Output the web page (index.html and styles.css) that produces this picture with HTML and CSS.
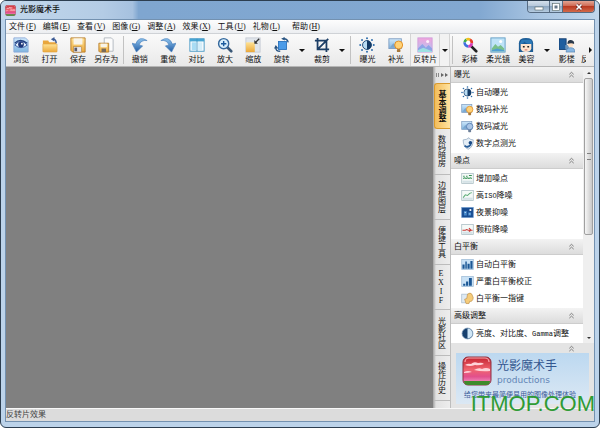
FILE: index.html
```html
<!DOCTYPE html>
<html lang="zh-CN">
<head>
  <meta charset="UTF-8">
  <meta name="viewport" content="width=device-width, initial-scale=1">
  <title>光影魔术手</title>
  <link rel="stylesheet" href="styles.css">
</head>
<body>
  <svg class="defs" aria-hidden="true">
    <defs>
      <linearGradient id="gold" x1="0" y1="0" x2="0" y2="1"><stop offset="0" stop-color="#ffe294"/><stop offset="1" stop-color="#eba83a"/></linearGradient>
      <linearGradient id="blue" x1="0" y1="0" x2="0" y2="1"><stop offset="0" stop-color="#8fc4ee"/><stop offset="1" stop-color="#1f5ba4"/></linearGradient>
      <linearGradient id="sky" x1="0" y1="0" x2="0" y2="1"><stop offset="0" stop-color="#cfe8fb"/><stop offset="1" stop-color="#7fb4e0"/></linearGradient>
      <linearGradient id="red" x1="0" y1="0" x2="0" y2="1"><stop offset="0" stop-color="#c4222f"/><stop offset=".45" stop-color="#f0646e"/><stop offset=".7" stop-color="#e2508c"/><stop offset="1" stop-color="#f6a6d6"/></linearGradient>
      <linearGradient id="pink" x1="0" y1="0" x2="0" y2="1"><stop offset="0" stop-color="#f3a3dc"/><stop offset="1" stop-color="#a9c8f4"/></linearGradient>
    </defs>
    <symbol id="i-exposure" viewBox="0 0 18 18">
      <g fill="#2c6cab"><circle cx="9" cy="1.4" r="1.1"/><circle cx="9" cy="16.6" r="1.1"/><circle cx="1.4" cy="9" r="1.1"/><circle cx="16.6" cy="9" r="1.1"/><circle cx="3.4" cy="3.4" r="1.1"/><circle cx="14.6" cy="3.4" r="1.1"/><circle cx="3.4" cy="14.6" r="1.1"/><circle cx="14.6" cy="14.6" r="1.1"/></g>
      <circle cx="9" cy="9" r="5" fill="#b9dcf3" stroke="#17406f"/><path d="M9 4a5 5 0 0 1 0 10z" fill="#123a66"/>
    </symbol>
    <symbol id="i-fill" viewBox="0 0 18 18">
      <rect x="1" y="2" width="14" height="11" fill="url(#sky)" stroke="#7e9cc0"/><path d="M2 12l4-5 3 3 3-4 2 6z" fill="#7aa6cf"/>
      <circle cx="12" cy="9" r="4.5" fill="#ffd277" stroke="#e08a1c"/><rect x="10" y="13.5" width="4" height="3.5" rx="1" fill="#a9793c"/>
    </symbol>
    <symbol id="i-reduce" viewBox="0 0 18 18">
      <rect x="1" y="2" width="14" height="11" fill="url(#sky)" stroke="#7e9cc0"/><path d="M2 12l4-5 3 3 3-4 2 6z" fill="#7aa6cf"/>
      <circle cx="12" cy="9" r="4.5" fill="#a9c5e6" stroke="#486fa6"/><rect x="10" y="13.5" width="4" height="3.5" rx="1" fill="#6c7f99"/>
    </symbol>
    <symbol id="i-chart" viewBox="0 0 18 18"><rect x="1" y="2" width="16" height="14" fill="#f5faf8" stroke="#a4b9c0"/><rect x="2" y="12" width="14" height="3" fill="#d4e2e6"/></symbol>
    <symbol id="i-hist" viewBox="0 0 18 18"><rect x="1" y="2" width="16" height="14" fill="#c9e2f6" stroke="#9bb9d4"/></symbol>
    <symbol id="i-collapse" viewBox="0 0 8 8"><path d="M1.5 3.8L4 1.5l2.5 2.3M1.5 7L4 4.7 6.5 7" fill="none" stroke="#666" stroke-width=".9"/></symbol>
    <symbol id="i-logo" viewBox="0 0 30 30">
      <rect x="1" y="1" width="28" height="28" rx="5" fill="url(#red)" stroke="#8d3340"/>
      <path d="M2 25h26a4 4 0 0 1-4 4H6a4 4 0 0 1-4-4z" fill="#3e8b2c"/>
      <path d="M3 9q3-2 6-1 3-3 7-1 4-1 6 1-5 2-9 1-5 2-10 0zM12 14q5-3 8-1 4-2 8 0v2q-8 1-16-1zM2 16q4-2 8 0-4 1-8 1z" fill="#ffd3d8"/>
      <path d="M3 6a4 4 0 0 1 4-4h16a4 4 0 0 1 4 4" fill="none" stroke="#f7a9ae" stroke-width="1.2"/>
    </symbol>
  </svg>

  <div class="window">
    <header class="titlebar">
      <svg class="app-icon"><use href="#i-logo"/></svg>
      <h1 class="title">光影魔术手</h1>
      <div class="caption-buttons">
        <button class="caption" aria-label="最小化"><svg viewBox="0 0 10 8"><rect x="1" y="4" width="8" height="3" fill="#fff" stroke="#566" stroke-width=".6"/></svg></button>
        <button class="caption caption-max" aria-label="最大化"><svg viewBox="0 0 10 8"><rect x="1.500" y=".5" width="7" height="7" fill="#fff" stroke="#566" stroke-width=".6"/><rect x="3.500" y="2.500" width="3" height="3" fill="#678"/></svg></button>
        <button class="caption caption-close" aria-label="关闭"><svg viewBox="0 0 10 8"><path d="M2.500 1.500l5 5M7.500 1.500l-5 5" stroke="#5b2020" stroke-width="2.800"/><path d="M2.500 1.500l5 5M7.500 1.500l-5 5" stroke="#fff" stroke-width="1.700"/></svg></button>
      </div>
    </header>

    <div class="client">
      <nav class="menubar">
        <button>文件<span>(<u>F</u>)</span></button>
        <button>编辑<span>(<u>E</u>)</span></button>
        <button>查看<span>(<u>V</u>)</span></button>
        <button>图像<span>(<u>G</u>)</span></button>
        <button>调整<span>(<u>A</u>)</span></button>
        <button>效果<span>(<u>X</u>)</span></button>
        <button>工具<span>(<u>U</u>)</span></button>
        <button>礼物<span>(<u>L</u>)</span></button>
        <button class="menu-help">帮助<span>(<u>H</u>)</span></button>
      </nav>

      <div class="toolbar">
        <button class="tool"><svg viewBox="0 0 18 18"><path d="M1 1h13l3 3v13H1z" fill="url(#sky)" stroke="#8aa9d8"/><path d="M2 9q7-8 14 0-7 6-14 0z" fill="#e9f2fb" stroke="#314f9a"/><circle cx="9" cy="8.500" r="3.200" fill="#1d3678"/><circle cx="10" cy="7.500" r="1" fill="#fff"/><path d="M2 7q6-6 14 0" fill="none" stroke="#24407f" stroke-width="1.500"/></svg>浏览</button>
        <button class="tool"><svg viewBox="0 0 18 18"><path d="M1 4h6l1 2h8v11H1z" fill="#e9a63c"/><path d="M1 8h16v8q0 1-1 1H2q-1 0-1-1z" fill="url(#gold)" stroke="#dfa040" stroke-width=".6"/><path d="M16 7q0-4-3-5" fill="none" stroke="#3b5a94" stroke-width="1.500"/><path d="M10 2.500L14 0v5z" fill="#3b5a94"/></svg>打开</button>
        <button class="tool"><svg viewBox="0 0 18 18"><path d="M1 1h16v16H3l-2-2z" fill="url(#gold)" stroke="#b87c28"/><rect x="4" y="1.500" width="10" height="7" fill="#f8f4ea"/><rect x="4" y="11" width="9" height="6" fill="#e9e9ef" stroke="#a9782f" stroke-width=".6"/><rect x="5" y="12" width="3" height="4" fill="#5a5a68"/></svg>保存</button>
        <button class="tool"><svg viewBox="0 0 18 18"><path d="M7 1h8l2 2v13H7z" fill="#fbfbfb" stroke="#aeb4bc"/><path d="M1 7h11v10H2l-1-1z" fill="url(#gold)" stroke="#b87c28"/><rect x="3" y="7.500" width="7" height="4" fill="#f8f4ea"/><rect x="4" y="13" width="5" height="4" fill="#776a5c"/></svg>另存为</button>
        <span class="sep"></span>
        <button class="tool"><svg viewBox="0 0 18 18"><path d="M17 4Q8-2 4 8L0 7l5 10 7-7-4-1q2-6 9-5z" fill="url(#blue)" stroke="#4a7fbc" stroke-width=".7"/></svg>撤销</button>
        <button class="tool"><svg viewBox="0 0 18 18"><path d="M1 4q9-6 13 4l4-1-5 10-7-7 4-1Q8 3 1 4z" fill="url(#blue)" stroke="#4a7fbc" stroke-width=".7"/></svg>重做</button>
        <button class="tool"><svg viewBox="0 0 18 18"><rect x="1" y="2" width="16" height="14" fill="#fff" stroke="#3c93c2"/><rect x="1" y="2" width="16" height="3" fill="#48a5d3"/><rect x="3" y="6" width="5" height="9" fill="#a9dcf4"/><rect x="10" y="6" width="5" height="9" fill="#d5eefa"/><path d="M9 2v14" stroke="#3c93c2"/></svg>对比</button>
        <button class="tool"><svg viewBox="0 0 18 18"><path d="M11 11l5 5" stroke="#3a5877" stroke-width="3" stroke-linecap="round"/><circle cx="7.500" cy="7.500" r="5.700" fill="#d8effc" stroke="#36699d" stroke-width="1.600"/><path d="M7.500 4.500v6M4.500 7.500h6" stroke="#1b5b9d" stroke-width="1.600"/></svg>放大</button>
        <button class="tool"><svg viewBox="0 0 18 18"><rect x="1" y="1" width="16" height="16" fill="#e0e5eb" stroke="#c6ccd4"/><rect x="1" y="6" width="10" height="11" fill="url(#gold)"/><path d="M16 2l-4 4" stroke="#333" stroke-width="1.500"/><path d="M10.500 3.500v4h4z" fill="#333"/></svg>缩放</button>
        <button class="tool"><svg viewBox="0 0 18 18"><rect x="5" y="5" width="9" height="9" fill="#4b9be8" stroke="#2a72bd"/><path d="M11 2q4 0 5 4M7 16q-5 0-5-4" fill="none" stroke="#275382" stroke-width="1.500"/><path d="M12 0v4L8 2zM0 13l2-4 3 4z" fill="#275382"/></svg>旋转</button>
        <button class="drop" aria-label="旋转选项"></button>
        <button class="tool"><svg viewBox="0 0 18 18"><path d="M4 1v13h13M1 4h13v13M4 14L16 2" fill="none" stroke="#1c3e66" stroke-width="2"/></svg>裁剪</button>
        <button class="drop" aria-label="裁剪选项"></button>
        <span class="sep"></span>
        <button class="tool"><svg><use href="#i-exposure"/></svg>曝光</button>
        <button class="tool"><svg><use href="#i-fill"/></svg>补光</button>
        <button class="tool tool-on"><svg viewBox="0 0 18 18"><rect x="1" y="1" width="16" height="16" fill="url(#pink)" stroke="#cf9edc"/><path d="M1 13l5-5 4 4 3-3 4 4v4H1z" fill="#8ea4e6"/><path d="M1 15l6-3 10 4v1H1z" fill="#9ce0e2"/><circle cx="12" cy="5" r="1.700" fill="#fff0fb"/></svg>反转片</button>
        <button class="drop drop-on" aria-label="反转片选项"></button>
        <span class="sep"></span>
        <button class="tool"><svg viewBox="0 0 18 18"><path d="M8 8l8 8" stroke="#222" stroke-width="3" stroke-linecap="round"/><circle cx="7" cy="6.500" r="4.200" fill="#fff"/><g stroke-width="3" fill="none"><path d="M3 6a4 4 0 0 1 2-3" stroke="#3fae49"/><path d="M5 3a4 4 0 0 1 4 0" stroke="#f0c020"/><path d="M9 3a4 4 0 0 1 2 4" stroke="#e8402c"/><path d="M11 7a4 4 0 0 1-4 3.500" stroke="#d83bb8"/><path d="M7 10.500A4 4 0 0 1 3 6" stroke="#3d6fe0"/></g></svg>彩棒</button>
        <button class="tool"><svg viewBox="0 0 18 18"><rect x="1" y="1" width="16" height="16" fill="#bfe3f8" stroke="#5f9cc4"/><path d="M2 13l4-5 3 3 3-2 4 4v3H2z" fill="#79bf8b"/><path d="M2 15l6-2 8 2v1H2z" fill="#4f9ed2"/><circle cx="12" cy="5" r="1.700" fill="#fff"/></svg>柔光镜</button>
        <button class="tool"><svg viewBox="0 0 18 18"><path d="M1 17V7q0-6 8-6t8 6v10z" fill="#1d5d96"/><path d="M3 8h12v5q-1 4-6 4t-6-4z" fill="#ffe6cf"/><path d="M2 8q4 0 5-3 3 3 9 3l-1-5H4z" fill="#2d7ab8"/><path d="M5.500 11h2M10.500 11h2" stroke="#222" stroke-width="1.600"/><path d="M7.500 14.500h3" stroke="#d25c5c"/></svg>美容</button>
        <button class="drop" aria-label="美容选项"></button>
        <button class="tool"><svg viewBox="0 0 18 18"><rect x="0" y="2" width="8" height="12" fill="#1f5e9f" stroke="#123e70"/><rect x="7" y="9" width="4" height="5" fill="#6a94bd"/><path d="M8 17q0-5 5-5t5 5z" fill="#86b6e3" stroke="#3e6d9e" stroke-width=".6"/><circle cx="13" cy="8" r="3.300" fill="#ffe0c4"/><path d="M9.500 8q0-5 4-4.500T17 8q-3-2-7.500 0z" fill="#29384a"/></svg>影楼</button>
        <button class="tool tool-cut">反</button>
        <button class="scroll-right" aria-label="更多工具"></button>
      </div>

      <div class="content">
        <main class="canvas"></main>

        <div class="tabs">
          <button class="tabs-toggle" aria-label="收起面板"><svg viewBox="0 0 12 6"><path d="M.5 1v4M2.500 1v4" stroke="#888"/><path d="M5 1l3 2-3 2zM9 1l3 2-3 2z" fill="#666"/></svg></button>
          <button class="tab tab-active">基本调整</button>
          <button class="tab">数码暗房</button>
          <button class="tab">边框图层</button>
          <button class="tab">便捷工具</button>
          <button class="tab tab-latin">EXIF</button>
          <button class="tab">光影社区</button>
          <button class="tab">操作历史</button>
        </div>

        <aside class="side">
          <div class="panel">
            <div class="sections">
              <section>
                <button class="section-head">曝光<svg><use href="#i-collapse"/></svg></button>
                <div class="items">
                  <button class="item"><svg><use href="#i-exposure"/></svg>自动曝光</button>
                  <button class="item"><svg><use href="#i-fill"/></svg>数码补光</button>
                  <button class="item"><svg><use href="#i-reduce"/></svg>数码减光</button>
                  <button class="item"><svg viewBox="0 0 18 18"><path d="M3 4q5 0 8-3 1 3 6 3 0 10-7 13Q3 14 3 4z" fill="#e5eef6" stroke="#8ea6bd"/><path d="M5 12q4 4 9-2" fill="none" stroke="#285d98" stroke-width="2.500"/><circle cx="13" cy="8" r="2.500" fill="#1a4a85"/></svg>数字点测光</button>
                </div>
              </section>
              <section>
                <button class="section-head">噪点<svg><use href="#i-collapse"/></svg></button>
                <div class="items">
                  <button class="item"><svg viewBox="0 0 18 18"><use href="#i-chart"/><path d="M3 9l2-1 2 1 2-1 2 1 2-1 2 1M3 6h2m2 0h2m2-1h4" fill="none" stroke="#349152" stroke-width="1.400"/></svg>增加噪点</button>
                  <button class="item"><svg viewBox="0 0 18 18"><use href="#i-chart"/><path d="M3 12l3-4 3 1 3-3 3-1" fill="none" stroke="#58aa73" stroke-width="1.400"/></svg><span>高<span class="latin">ISO</span>降噪</span></button>
                  <button class="item"><svg viewBox="0 0 18 18"><rect x="1" y="2" width="16" height="14" fill="#174c91" stroke="#6f9bcc"/><path d="M4 13V7h4v6m2 0V9h4v4" fill="#4488ca"/><circle cx="13" cy="5.500" r="1.500" fill="#fff"/><path d="M5 9h2m4 2h2" stroke="#d8ebff"/></svg>夜景抑噪</button>
                  <button class="item"><svg viewBox="0 0 18 18"><use href="#i-chart"/><path d="M2 10h4l2-1 2 1h6M11 7l3 3-3 2" fill="none" stroke="#c93a35" stroke-width="1.500"/></svg>颗粒降噪</button>
                </div>
              </section>
              <section>
                <button class="section-head">白平衡<svg><use href="#i-collapse"/></svg></button>
                <div class="items">
                  <button class="item"><svg viewBox="0 0 18 18"><use href="#i-hist"/><path d="M2 15V9h3v6zm4 0V5h2v10zm3 0V8h3v7zm4 0V4h3v11z" fill="#1b5795"/></svg>自动白平衡</button>
                  <button class="item"><svg viewBox="0 0 18 18"><use href="#i-hist"/><path d="M3 15v-3h3v3zm4 0V9h3v6zm4 0V4h4v11z" fill="#1b5795"/></svg>严重白平衡校正</button>
                  <button class="item"><svg viewBox="0 0 18 18"><rect x="1" y="3" width="10" height="12" fill="#dfeaf3" stroke="#a9bccd"/><path d="M7 16l-2-6 3-1 1-6q4-3 6 0l2 5q-1 6-5 5l-1 3z" fill="#f5cc7b" stroke="#b98439" stroke-width=".8"/></svg>白平衡一指键</button>
                </div>
              </section>
              <section>
                <button class="section-head">高级调整<svg><use href="#i-collapse"/></svg></button>
                <div class="items">
                  <button class="item"><svg viewBox="0 0 18 18"><circle cx="9" cy="9" r="7.500" fill="#16406e" stroke="#6f8fb0"/><path d="M9 2a7 7 0 0 1 0 14z" fill="#cfe6f6"/></svg><span>亮度、对比度、<span class="latin">Gamma</span>调整</span></button>
                </div>
              </section>
            </div>
            <div class="scrollbar">
              <span class="arrow-up"></span>
              <span class="thumb"></span>
              <span class="arrow-down"></span>
            </div>
          </div>
          <div class="promo-bar"><svg><use href="#i-collapse"/></svg></div>
          <div class="promo">
            <div class="brand">
              <svg><use href="#i-logo"/></svg>
              <div>
                <div class="brand-name">光影魔术手</div>
                <div class="brand-sub">productions</div>
              </div>
            </div>
            <div class="slogan">给您带来最简便易用的图像处理体验</div>
          </div>
        </aside>
      </div>

      <footer class="statusbar">反转片效果</footer>
    </div>
    <div class="watermark">ITMOP.COM</div>
  </div>
</body>
</html>
```

FILE: styles.css
```css
* {
  box-sizing: border-box;
}
body {
  margin: 0;
  background: #fff;
  font-family: "Liberation Sans", "Noto Sans CJK SC", sans-serif;
  font-size: 8px;
  line-height: 12px;
  color: #111;
}
button {
  margin: 0;
  padding: 0;
  border: none;
  background: none;
  font: inherit;
  color: inherit;
  white-space: nowrap;
}
svg {
  display: block;
  flex: none;
}
.defs {
  position: absolute;
  width: 0;
  height: 0;
}

/* window frame */
.window {
  position: relative;
  display: flex;
  flex-direction: column;
  height: 100vh;
  padding: 0 4px 5px;
  border: 1px solid #2c3e50;
  border-radius: 6px;
  background: #bcd3ea;
  overflow: hidden;
}
.titlebar {
  display: flex;
  align-items: center;
  gap: 4px;
  height: 18px;
  flex: none;
  margin: 0 -4px;
  padding: 0 4px;
  background: linear-gradient(90deg, #c3d8ec, #b4cce5 17%, #a6c1df 22%, #7fa6d0 23%, #82a8d1 80%, #a9c5e2 90%, #c0d6ec);
}
.app-icon {
  width: 11px;
  height: 11px;
}
.title {
  flex: 1;
  margin: 0;
  font-size: 8px;
  font-weight: 500;
}
.caption-buttons {
  display: flex;
  align-self: flex-start;
  border: 1px solid #566b82;
  border-top: none;
  border-radius: 0 0 4px 4px;
  overflow: hidden;
}
.caption {
  display: flex;
  align-items: center;
  justify-content: center;
  width: 21px;
  height: 11px;
  background: linear-gradient(#d3dfeb, #b6c8da 45%, #8ea8c2 50%, #b5cbe0);
}
.caption svg {
  width: 10px;
  height: 8px;
}
.caption-max {
  width: 14px;
  border-left: 1px solid #566b82;
  border-right: 1px solid #566b82;
}
.caption-close {
  width: 31px;
  background: linear-gradient(#e2a493, #cf6a54 45%, #b93a22 50%, #d2694a);
}
.client {
  display: flex;
  flex-direction: column;
  flex: 1;
  min-height: 0;
  border: 1px solid #7391b0;
  background: #f0f0f0;
}

/* menu */
.menubar {
  display: flex;
  align-items: center;
  gap: 7px;
  height: 14px;
  flex: none;
  padding-left: 3px;
  background: linear-gradient(#fdfdfd, #eceef1);
  border-bottom: 1px solid #cfd2d6;
}
.menubar span {
  margin-left: 1px;
  font-family: "Liberation Serif", serif;
}
.menu-help {
  margin-left: 5px;
}

/* toolbar */
.toolbar {
  display: flex;
  height: 33px;
  flex: none;
  padding-left: 1px;
  background: linear-gradient(#fafafa, #e9e9e9);
  border-bottom: 1px solid #b5b5b5;
  overflow: hidden;
}
.tool {
  display: flex;
  flex-direction: column;
  align-items: center;
  justify-content: flex-end;
  flex: 1 1 0;
  min-width: 0;
  gap: 1px;
}
.tool svg {
  width: 16px;
  height: 16px;
}
.tool-on {
  border: 1px solid #d4d4d4;
  border-width: 0 1px;
  background: #f2f2f2;
}
.tool-cut {
  flex: none;
  width: 5px;
  align-items: flex-start;
  overflow: hidden;
}
.sep {
  flex: none;
  width: 1px;
  margin: 2px 2px;
  background: #c2c2c2;
}
.drop {
  display: flex;
  align-items: center;
  justify-content: center;
  flex: none;
  width: 12px;
}
.drop::after {
  content: "";
  border: 3px solid transparent;
  border-top-color: #111;
  border-bottom: none;
}
.drop-on {
  width: 10px;
  background: #f2f2f2;
  border-right: 1px solid #d4d4d4;
}
.scroll-right {
  display: flex;
  align-items: center;
  justify-content: center;
  flex: none;
  width: 8px;
}
.scroll-right::after {
  content: "";
  border: 3px solid transparent;
  border-left-color: #111;
  border-right: none;
}

/* work area */
.content {
  display: flex;
  flex: 1;
  min-height: 0;
}
.canvas {
  flex: 1;
  background: #808080;
}
.tabs {
  display: flex;
  flex-direction: column;
  flex: none;
  width: 18px;
  padding-bottom: 7px;
  background: linear-gradient(90deg, #a2a2a2, #e2e2e2 3px, #ededed);
  border-right: 1px solid #bdbdbd;
}
.tabs-toggle {
  display: flex;
  align-items: center;
  justify-content: center;
  height: 16px;
  flex: none;
}
.tabs-toggle svg {
  width: 12px;
  height: 6px;
}
.tab {
  display: flex;
  align-items: center;
  justify-content: center;
  flex: 1 1 0;
  min-height: 0;
  margin-left: 1px;
  padding-right: 3px;
  border-bottom: 1px solid #bcbcbc;
  writing-mode: vertical-rl;
  text-orientation: upright;
  line-height: 10px;
}
.tab-active {
  border: 1px solid #d99a2e;
  border-right: none;
  border-radius: 3px 0 0 3px;
  background: linear-gradient(90deg, #f3bd5b, #ffe3a0);
  font-weight: 700;
}
.tab-latin {
  font-family: "Liberation Serif", serif;
}

/* side panel */
.side {
  display: flex;
  flex-direction: column;
  flex: none;
  width: 143px;
  background: #e4e4e4;
}
.panel {
  display: flex;
  flex: 1;
  min-height: 0;
}
.sections {
  flex: 1;
  overflow: hidden;
  background: #fff;
}
.section-head {
  display: flex;
  align-items: center;
  justify-content: space-between;
  width: 100%;
  height: 16px;
  padding: 0 8px 0 3px;
  background: linear-gradient(#f3f3f3, #dcdcdc);
  border-bottom: 1px solid #cdcdcd;
}
.section-head svg,
.promo-bar svg {
  width: 7px;
  height: 7px;
}
.items {
  padding: 1px 0 1px 10px;
}
.item {
  display: flex;
  align-items: center;
  gap: 2px;
  width: 100%;
  height: 17px;
}
.item svg {
  width: 13px;
  height: 13px;
}
.latin {
  font-family: "Liberation Mono", monospace;
  font-size: 7px;
}
.scrollbar {
  display: flex;
  flex-direction: column;
  align-items: center;
  flex: none;
  width: 11px;
  background: #efefef;
}
.arrow-up,
.arrow-down {
  flex: none;
  margin: 5px 0 4px;
  border: 2px solid transparent;
  border-top: none;
  border-bottom-color: #333;
}
.arrow-down {
  margin: auto 0 4px;
  border-top: 2px solid #333;
  border-bottom: none;
}
.thumb {
  display: flex;
  align-items: center;
  justify-content: center;
  width: 9px;
  height: 57%;
  border: 1px solid #a0a0a0;
  border-radius: 2px;
  background: linear-gradient(90deg, #f6f6f6, #c8c8c8);
}
.thumb::after {
  content: "";
  width: 4px;
  height: 5px;
  border: 1px solid #808080;
  border-width: 1px 0;
}
.promo-bar {
  display: flex;
  align-items: center;
  justify-content: flex-end;
  height: 10px;
  flex: none;
  padding-right: 19px;
}
.promo {
  flex: none;
  margin: 0 5px 4px;
  padding: 2px 0 0 6px;
  height: 51px;
  background: linear-gradient(#bcd8f0, #dbe8f4);
}
.brand {
  display: flex;
  align-items: center;
  gap: 5px;
}
.brand > svg {
  width: 30px;
  height: 32px;
}
.brand-name {
  font-size: 12px;
  line-height: 18px;
  color: #34568f;
}
.brand-sub {
  font-family: "DejaVu Sans", sans-serif;
  font-size: 9px;
  line-height: 10px;
  color: #6385b5;
}
.slogan {
  margin: 2px 0 0 2px;
  font-size: 7px;
  color: #3a5a98;
}

.statusbar {
  height: 13px;
  flex: none;
  border-top: 1px solid #f8f8f8;
  background: #dcdcdc;
  color: #444;
}
.watermark {
  position: absolute;
  right: 4px;
  bottom: 13px;
  font-size: 22px;
  line-height: 20px;
  color: #2f9b35;
}
```
